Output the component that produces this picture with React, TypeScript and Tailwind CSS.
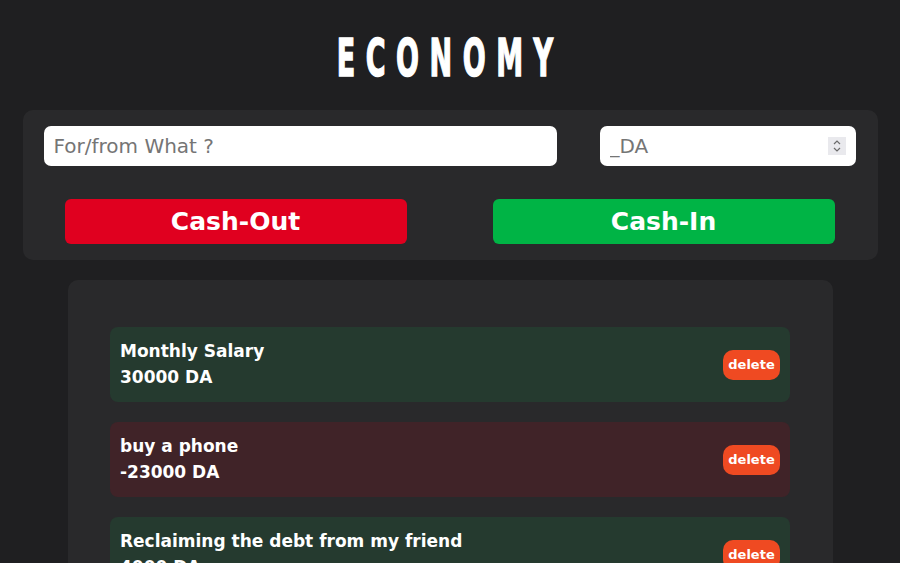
import React from "react";

const items = [
  { title: "Monthly Salary", amount: "30000 DA", income: true },
  { title: "buy a phone", amount: "-23000 DA", income: false },
  { title: "Reclaiming the debt from my friend", amount: "4000 DA", income: true },
];

export default function App() {
  return (
    <div
      className="min-h-screen bg-[#1f1f21] pt-[32px] pb-10"
      style={{ fontFamily: '"DejaVu Sans", sans-serif' }}
    >
      <div className="flex justify-center mb-[26px]">
        <h1 className="text-[52px] leading-none font-bold text-white tracking-[20.2px] scale-x-[0.52] whitespace-nowrap [-webkit-text-stroke:1.6px_white]">
          ECONOMY
        </h1>
      </div>

      <div className="w-[855px] mx-auto bg-[#29292b] rounded-[10px] px-[21px] pt-[16px] pb-[16px]">
        <div className="flex justify-between pr-[1px]">
          <input
            type="text"
            placeholder="For/from What ?"
            className="w-[513px] h-[40px] bg-white rounded-[7px] px-[10px] text-[20px] text-[#222] placeholder:text-[#757575] outline-none"
          />
          <div className="relative w-[256px] h-[40px]">
            <input
              type="text"
              placeholder="_DA"
              className="w-full h-full bg-white rounded-[7px] px-[10px] text-[20px] text-[#222] placeholder:text-[#757575] outline-none"
            />
            <div className="absolute right-[10px] top-[11px] w-[18px] h-[18px] bg-[#e9e9ed] flex flex-col items-center justify-center">
              <svg width="10" height="14" viewBox="0 0 10 14" fill="none" stroke="#6b6b6b" strokeWidth="1.2">
                <path d="M2 5 L5 2 L8 5" />
                <path d="M2 9 L5 12 L8 9" />
              </svg>
            </div>
          </div>
        </div>
        <div className="flex justify-between mt-[33px] pl-[21px] pr-[22px]">
          <button className="w-[342px] h-[45px] rounded-[6px] bg-[#e0001f] text-white font-bold text-[25px]">
            Cash-Out
          </button>
          <button className="w-[342px] h-[45px] rounded-[6px] bg-[#00b445] text-white font-bold text-[25px]">
            Cash-In
          </button>
        </div>
      </div>

      <div className="w-[765px] mx-auto mt-[20px] bg-[#29292b] rounded-[10px] pt-[47px] pb-[47px] flex flex-col gap-[20px] items-center">
        {items.map((it, i) => (
          <div
            key={i}
            className={`w-[680px] rounded-[8px] pl-[10px] pr-[10px] pt-[11px] pb-[12px] flex items-center justify-between ${
              it.income ? "bg-[#253a2f]" : "bg-[#402328]"
            }`}
          >
            <div className="text-white font-bold text-[17px] leading-[26px]">
              <div>{it.title}</div>
              <div>{it.amount}</div>
            </div>
            <button className="h-[30px] w-[57px] mt-[1px] rounded-[10px] bg-[#ef4a22] text-white font-bold text-[13px]">
              delete
            </button>
          </div>
        ))}
      </div>
    </div>
  );
}
